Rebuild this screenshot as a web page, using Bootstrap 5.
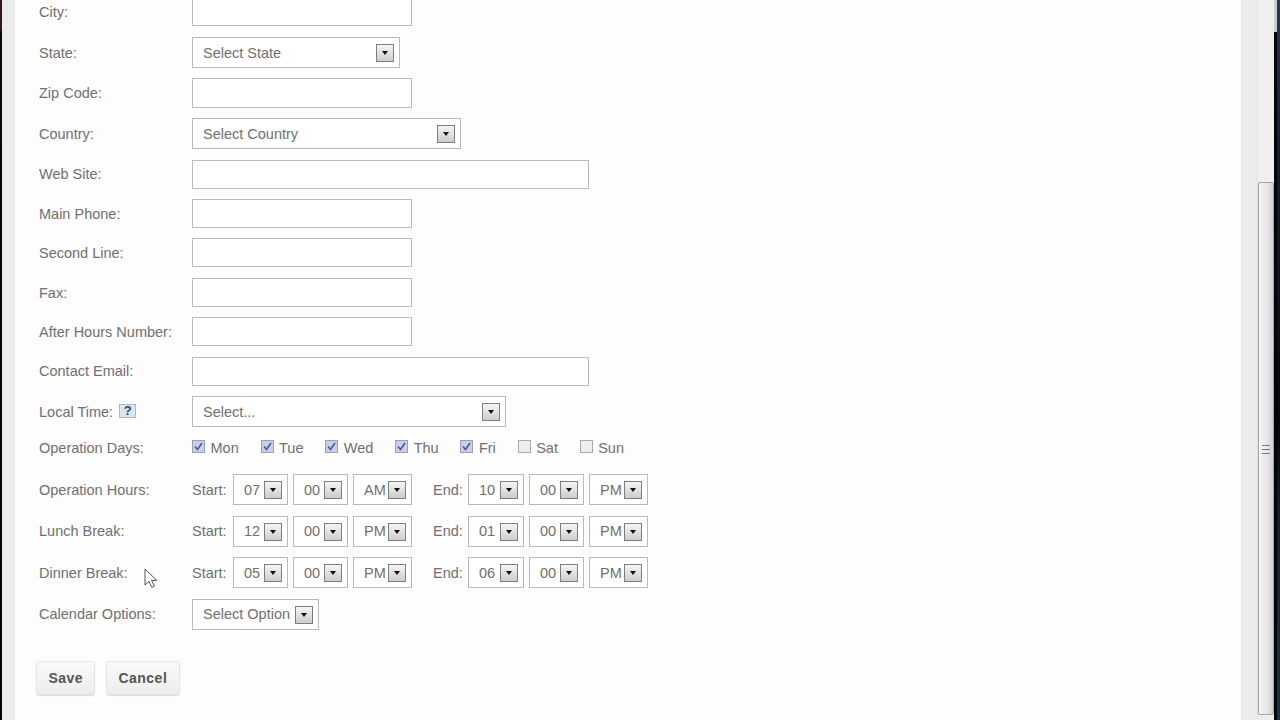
<!DOCTYPE html>
<html lang="en">
<head>
<meta charset="utf-8">
<title>Business Profile</title>
<link href="https://cdn.jsdelivr.net/npm/bootstrap@5.3.0/dist/css/bootstrap.min.css" rel="stylesheet">
<style>
html,body{height:720px;overflow:hidden;background:#000}
body{font-family:"Liberation Sans",Arial,sans-serif;font-size:14.5px;color:#707070;line-height:1.2}
.shell{height:720px;overflow:hidden;position:relative}
.edge-left{width:2px;background:linear-gradient(#3a1616 0,#3a1616 30px,#0c0606 32px,#050505 720px)}
.gutter-left{width:13px;background:#ececec}
.gutter-right{width:16px;background:#ececec;border-left:1px solid #e4e4e4}
.page-main{width:1226px;background:#fdfdfd;padding-left:24px;overflow:hidden}
.sb-track{width:17px;background:#efeff1;position:relative;border-left:1px solid #e2e2e2}
.sb-thumb{position:absolute;left:0;right:0;top:182px;height:533px;background:linear-gradient(90deg,#f6f6f7,#e6e6e9 60%,#cfcfd4);border:1px solid #a4a4a8;border-radius:2px}
.sb-grip{position:absolute;left:3px;top:262px;width:8px;height:9px;border-top:1px solid #777;border-bottom:1px solid #777;background:linear-gradient(#0000 3px,#777 3px,#777 4px,#0000 4px)}
.edge-right{width:6px;background:linear-gradient(#c5cfc6 0,#c5cfc6 32px,#050505 32px,#050505 720px) left top/3px 100% no-repeat,linear-gradient(#26365f 0,#141c3a 150px,#05060c 420px,#0d2338 530px,#16324e 720px)}
.form-flow{margin-top:-3px}
.fld{display:flex;align-items:center;margin-bottom:10.4px}
.fld-label{width:153px;flex:none;padding-top:2px}
.fld-input{height:29px}
.fld-city{margin-bottom:11px}
.fld-zip{height:30px;margin-bottom:10px}
.fld-select{height:31px;margin-bottom:10px}
.fld-country{margin-bottom:10.6px}
.text-box{height:100%;border:1px solid #bbb;border-radius:0;padding:0 8px;background:#fff;box-shadow:none}
.w-short{width:220px}
.w-wide{width:397px}
.pick{display:flex;align-items:center;justify-content:space-between;height:31px;border:1px solid #b9b9b9;background:#fff;padding:0 5px 0 10px;color:#707070}
.pick>span:first-child{padding-top:2px}
.w-state{width:208px}
.w-country{width:269px}
.w-local{width:314px}
.w-cal{width:127px}
.w-tm{width:55px}
.w-tm-end{width:56px}
.w-ap{width:59px}
.arrow-btn{flex:none;display:flex;align-items:center;justify-content:center;width:18px;height:18px;margin-top:1px;border:1px solid #7d7d7d;background:linear-gradient(#f5f5f5,#cdcdcd)}
.arrow-btn::after{content:"";border-left:3.5px solid transparent;border-right:3.5px solid transparent;border-top:4px solid #111}
.help-q{display:inline-flex;align-items:center;justify-content:center;width:17px;height:14px;margin-left:6px;font-weight:700;font-size:13px;color:#24466f;background:#dce6ef;border:1px solid #a3bccd;vertical-align:2px}
.days{height:22px;margin-bottom:15.2px}
.day-set{display:flex;gap:21.8px}
.day-item{display:flex;align-items:center;gap:5.5px;margin:0;padding-top:1px}
.form-check-input.day-box{width:13px;height:13px;margin:0 0 3px 0;border:1px solid #a9a9b5;border-radius:0;background-color:#eee;box-shadow:none}
.form-check-input.day-box:checked{background-color:#c9cfe6;border-color:#9a9eb8;background-size:13px 13px;background-image:url("data:image/svg+xml,%3Csvg xmlns='http://www.w3.org/2000/svg' viewBox='0 0 13 13'%3E%3Cpath d='M3 6.5l2.5 3L10 3' fill='none' stroke='%234a55a0' stroke-width='1.6'/%3E%3C/svg%3E")}
.time-row{display:flex;align-items:center;gap:5px}
.time-row .tag-start{width:36px;flex:none;padding-top:2px}
.time-row .tag-end{width:30px;flex:none;margin-left:16px;padding-top:2px}
.time-fld{height:31px;margin-bottom:10.5px}
.actions{margin-top:31.4px;margin-left:-3px;gap:10.5px}
.act-btn{font-family:"Liberation Sans",Arial,sans-serif;font-weight:700;font-size:14px;letter-spacing:.5px;color:#555;height:34px;padding:0 11.4px;background:linear-gradient(#fafafa,#ededed);border:1px solid #e3e3e3;border-radius:3px;box-shadow:0 1px 1px #ddd}
.cursor-mark{position:absolute;left:144px;top:568px}
</style>
</head>
<body>
<div class="shell d-flex">
  <div class="edge-left"></div>
  <div class="gutter-left"></div>
  <main class="page-main">
    <form class="form-flow">
      <div class="fld fld-input fld-city"><span class="fld-label">City:</span><input class="form-control text-box w-short" type="text"></div>
      <div class="fld fld-select"><span class="fld-label">State:</span><div class="pick w-state"><span>Select State</span><span class="arrow-btn"></span></div></div>
      <div class="fld fld-zip"><span class="fld-label">Zip Code:</span><input class="form-control text-box w-short" type="text"></div>
      <div class="fld fld-select fld-country"><span class="fld-label">Country:</span><div class="pick w-country"><span>Select Country</span><span class="arrow-btn"></span></div></div>
      <div class="fld fld-input"><span class="fld-label">Web Site:</span><input class="form-control text-box w-wide" type="text"></div>
      <div class="fld fld-input"><span class="fld-label">Main Phone:</span><input class="form-control text-box w-short" type="text"></div>
      <div class="fld fld-input"><span class="fld-label">Second Line:</span><input class="form-control text-box w-short" type="text"></div>
      <div class="fld fld-input"><span class="fld-label">Fax:</span><input class="form-control text-box w-short" type="text"></div>
      <div class="fld fld-input"><span class="fld-label">After Hours Number:</span><input class="form-control text-box w-short" type="text"></div>
      <div class="fld fld-input"><span class="fld-label">Contact Email:</span><input class="form-control text-box w-wide" type="text"></div>
      <div class="fld fld-select"><span class="fld-label">Local Time:<span class="help-q">?</span></span><div class="pick w-local"><span>Select...</span><span class="arrow-btn"></span></div></div>
      <div class="fld days"><span class="fld-label">Operation Days:</span>
        <div class="day-set">
          <label class="day-item"><input class="form-check-input day-box" type="checkbox" checked>Mon</label>
          <label class="day-item"><input class="form-check-input day-box" type="checkbox" checked>Tue</label>
          <label class="day-item"><input class="form-check-input day-box" type="checkbox" checked>Wed</label>
          <label class="day-item"><input class="form-check-input day-box" type="checkbox" checked>Thu</label>
          <label class="day-item"><input class="form-check-input day-box" type="checkbox" checked>Fri</label>
          <label class="day-item"><input class="form-check-input day-box" type="checkbox">Sat</label>
          <label class="day-item"><input class="form-check-input day-box" type="checkbox">Sun</label>
        </div>
      </div>
      <div class="fld time-fld"><span class="fld-label">Operation Hours:</span>
        <div class="time-row"><span class="tag-start">Start:</span>
          <div class="pick w-tm"><span>07</span><span class="arrow-btn"></span></div><div class="pick w-tm"><span>00</span><span class="arrow-btn"></span></div><div class="pick w-ap"><span>AM</span><span class="arrow-btn"></span></div>
          <span class="tag-end">End:</span>
          <div class="pick w-tm-end"><span>10</span><span class="arrow-btn"></span></div><div class="pick w-tm"><span>00</span><span class="arrow-btn"></span></div><div class="pick w-ap"><span>PM</span><span class="arrow-btn"></span></div>
        </div>
      </div>
      <div class="fld time-fld"><span class="fld-label">Lunch Break:</span>
        <div class="time-row"><span class="tag-start">Start:</span>
          <div class="pick w-tm"><span>12</span><span class="arrow-btn"></span></div><div class="pick w-tm"><span>00</span><span class="arrow-btn"></span></div><div class="pick w-ap"><span>PM</span><span class="arrow-btn"></span></div>
          <span class="tag-end">End:</span>
          <div class="pick w-tm-end"><span>01</span><span class="arrow-btn"></span></div><div class="pick w-tm"><span>00</span><span class="arrow-btn"></span></div><div class="pick w-ap"><span>PM</span><span class="arrow-btn"></span></div>
        </div>
      </div>
      <div class="fld time-fld"><span class="fld-label">Dinner Break:</span>
        <div class="time-row"><span class="tag-start">Start:</span>
          <div class="pick w-tm"><span>05</span><span class="arrow-btn"></span></div><div class="pick w-tm"><span>00</span><span class="arrow-btn"></span></div><div class="pick w-ap"><span>PM</span><span class="arrow-btn"></span></div>
          <span class="tag-end">End:</span>
          <div class="pick w-tm-end"><span>06</span><span class="arrow-btn"></span></div><div class="pick w-tm"><span>00</span><span class="arrow-btn"></span></div><div class="pick w-ap"><span>PM</span><span class="arrow-btn"></span></div>
        </div>
      </div>
      <div class="fld fld-select"><span class="fld-label">Calendar Options:</span><div class="pick w-cal"><span>Select Option</span><span class="arrow-btn"></span></div></div>
      <div class="d-flex actions">
        <button type="button" class="btn act-btn">Save</button>
        <button type="button" class="btn act-btn">Cancel</button>
      </div>
    </form>
  </main>
  <div class="gutter-right"></div>
  <div class="sb-track"><div class="sb-thumb"><div class="sb-grip"></div></div></div>
  <div class="edge-right"></div>
  <svg class="cursor-mark" width="15" height="21" viewBox="0 0 15 21"><path d="M1 1v16l4-3.6 2.8 6 2.6-1.2-2.8-5.8h5.2z" fill="#fff" stroke="#555" stroke-width="1"/></svg>
</div>
<script src="https://cdn.jsdelivr.net/npm/bootstrap@5.3.0/dist/js/bootstrap.bundle.min.js"></script>
</body>
</html>
